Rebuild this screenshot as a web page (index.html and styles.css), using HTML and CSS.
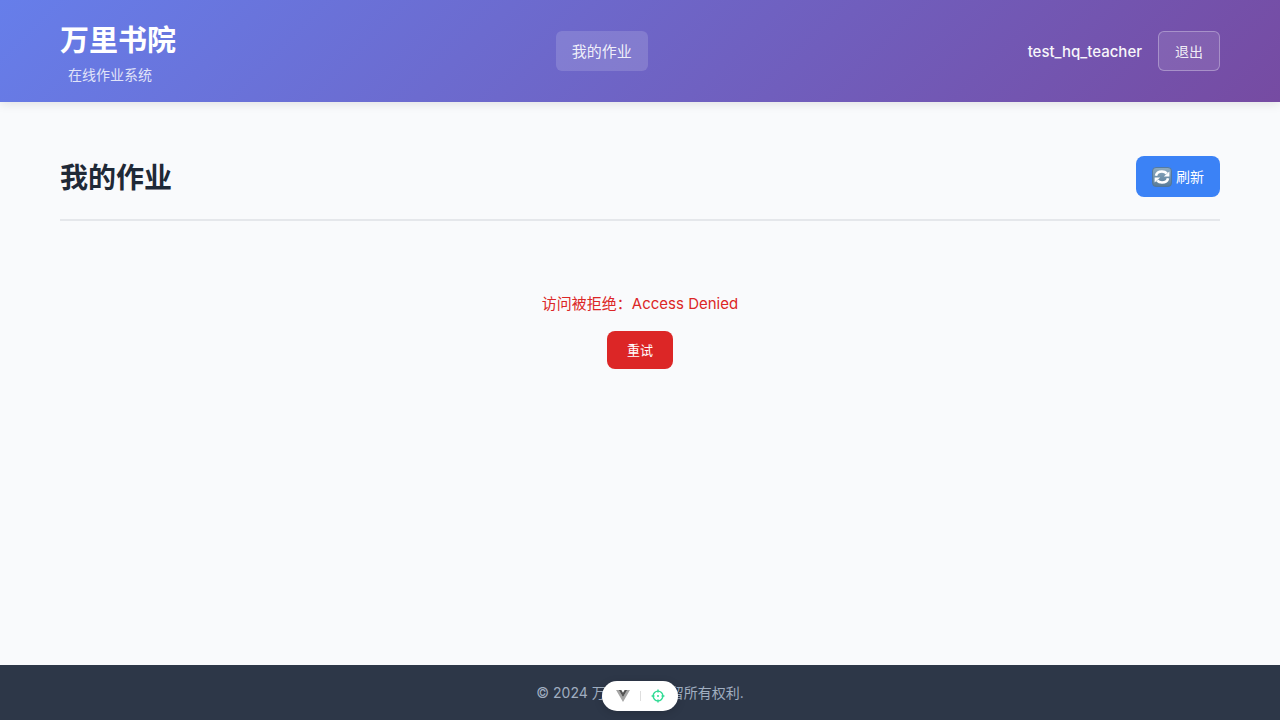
FILE: index.html
```html
<!DOCTYPE html>
<html lang="zh-CN">
<head>
<meta charset="utf-8">
<meta name="viewport" content="width=device-width, initial-scale=1">
<title>万里书院</title>
<link rel="stylesheet" href="styles.css">
</head>
<body>
<div class="layout">
  <header class="header">
    <div class="container header-content">
      <div class="logo">
        <h1 class="logo-title">万里书院</h1>
        <span class="logo-subtitle">在线作业系统</span>
      </div>
      <nav class="nav">
        <a class="nav-link" href="#">我的作业</a>
      </nav>
      <div class="user">
        <span class="user-name">test_hq_teacher</span>
        <button class="logout" type="button">退出</button>
      </div>
    </div>
  </header>

  <main class="container main">
    <div class="page-header">
      <h2 class="page-title">我的作业</h2>
      <button class="refresh" type="button">
        <svg class="refresh-icon" viewBox="0 0 20 20" aria-hidden="true">
          <defs>
            <linearGradient id="tile" x1="0" y1="0" x2="0" y2="1">
              <stop offset="0" stop-color="#8eabc0"/>
              <stop offset="1" stop-color="#587b98"/>
            </linearGradient>
          </defs>
          <rect x=".5" y=".5" width="19" height="19" rx="3.5" fill="url(#tile)" stroke="#527492" stroke-width=".8"/>
          <path d="M4 8.800C4.600 5.700 7 4.500 10 4.500c2 0 3.600.7 4.800 2M16 11.200c-.6 3.100-3 4.300-6 4.300-2 0-3.600-.7-4.800-2" fill="none" stroke="#fff" stroke-width="2.600"/>
          <path d="M17.400 4.400v5h-5.600zM2.600 15.600v-5h5.600z" fill="#fff"/>
        </svg>
        <span>刷新</span>
      </button>
    </div>
    <div class="error" role="alert">
      <p class="error-text">访问被拒绝：Access Denied</p>
      <button class="retry" type="button">重试</button>
    </div>
  </main>

  <footer class="footer">
    <p class="footer-text">© 2024 万里书院. 保留所有权利.</p>
  </footer>
</div>

<div class="devtools">
  <button class="devtools-button" type="button" aria-label="Vue DevTools">
    <svg class="vue-icon" viewBox="0 0 256 221" aria-hidden="true">
      <path d="M0 0l128 221L256 0h-51l-77 132L50 0z" fill="#a5a5a5"/>
      <path d="M50 0l78 133L205 0h-47l-30 51L97 0z" fill="#555"/>
    </svg>
  </button>
  <span class="devtools-divider"></span>
  <button class="devtools-button" type="button" aria-label="Component Inspector">
    <svg class="inspect-icon" viewBox="0 0 24 24" fill="none" stroke="#2fdb94" stroke-width="2.400" aria-hidden="true">
      <circle cx="12" cy="12" r="8.300"/>
      <path d="M12 1v5M12 18v5M1 12h5M18 12h5"/>
      <circle cx="12" cy="12" r="1.700" fill="#2fdb94" stroke="none"/>
    </svg>
  </button>
</div>
</body>
</html>
```

FILE: styles.css
```css
* {
  box-sizing: border-box;
  margin: 0;
  padding: 0;
}

body {
  font-family: Inter, "Noto Sans CJK SC", sans-serif;
  font-size: 15px;
  line-height: 24px;
  color: #1f2937;
  background: #f9fafc;
}

button {
  border: 0;
  font: inherit;
  cursor: pointer;
}

.layout {
  display: flex;
  flex-direction: column;
  min-height: 100vh;
}

.container {
  width: 100%;
  max-width: 1200px;
  margin: 0 auto;
  padding: 0 20px;
}

.header {
  padding: 16px 0;
  color: #fff;
  background: linear-gradient(135deg, #667eea 0%, #764ba2 100%);
  box-shadow: 0 2px 10px rgba(0, 0, 0, 0.1);
}

.header-content {
  display: flex;
  justify-content: space-between;
  align-items: center;
}

.logo {
  padding-bottom: 2px;
}

.logo-title {
  font-size: 29px;
  font-weight: 600;
  line-height: 50px;
}

.logo-subtitle {
  display: block;
  margin-left: 8px;
  font-size: 14px;
  line-height: 18px;
  opacity: 0.8;
}

.nav-link {
  display: block;
  padding: 9px 16px 7px;
  border-radius: 6px;
  color: rgba(255, 255, 255, 0.9);
  background: rgba(255, 255, 255, 0.15);
  text-decoration: none;
}

.user {
  display: flex;
  align-items: center;
  gap: 16px;
}

.user-name {
  padding-top: 2px;
  font-weight: 500;
  opacity: 0.95;
}

.logout {
  padding: 8px 16px 6px;
  border: 1px solid rgba(255, 255, 255, 0.3);
  border-radius: 6px;
  font-size: 14px;
  line-height: 24px;
  color: rgba(255, 255, 255, 0.9);
  background: rgba(255, 255, 255, 0.1);
}

.main {
  flex: 1;
}

.page-header {
  display: flex;
  justify-content: space-between;
  align-items: center;
  margin-top: 52px;
  padding-bottom: 20px;
  border-bottom: 2px solid #e5e7eb;
}

.page-title {
  padding-top: 4px;
  font-size: 28px;
  font-weight: 600;
  line-height: 41px;
}

.refresh {
  display: flex;
  align-items: center;
  gap: 4px;
  padding: 8px 16px;
  border-radius: 8px;
  font-size: 14px;
  line-height: 25px;
  color: #fff;
  background: #3b82f6;
}

.refresh-icon {
  width: 20px;
  height: 20px;
}

.error {
  padding: 71px 20px;
  text-align: center;
}

.error-text {
  margin-bottom: 15px;
  color: #dc2626;
}

.retry {
  padding: 8px 20px;
  border-radius: 8px;
  font-size: 13px;
  line-height: 22px;
  color: #fff;
  background: #dc2626;
}

.footer {
  padding: 16px 0;
  text-align: center;
  color: #a0aec0;
  background: #2d3748;
}

.footer-text {
  font-size: 14px;
  line-height: 23px;
}

.devtools {
  position: fixed;
  bottom: 9px;
  left: 50%;
  display: flex;
  align-items: center;
  justify-content: space-between;
  width: 76px;
  height: 30px;
  padding: 0 11px 0 12px;
  border-radius: 15px;
  background: #fff;
  box-shadow: 0 2px 8px rgba(0, 0, 0, 0.15);
  transform: translateX(-50%);
}

.devtools-button {
  display: flex;
  align-items: center;
  justify-content: center;
  width: 18px;
  height: 18px;
  background: none;
}

.devtools-divider {
  width: 1px;
  height: 10px;
  background: #dedede;
}

.vue-icon {
  width: 14px;
  height: 12px;
}

.inspect-icon {
  width: 14px;
  height: 14px;
}
```
